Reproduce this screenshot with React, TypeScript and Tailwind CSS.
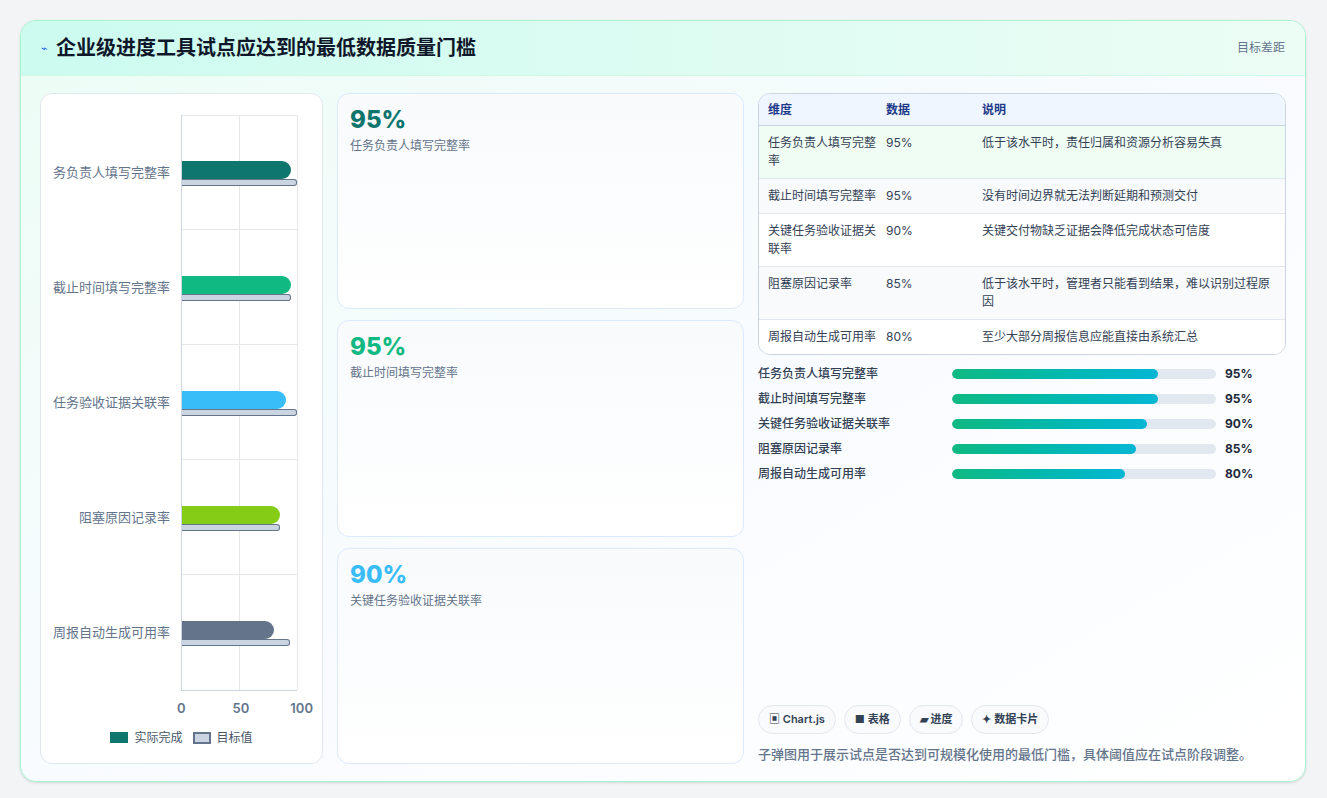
import React from "react";

const rows = [
  { label: "任务负责人填写完整率", show: "务负责人填写完整率", v: 95, t: 100, c: "#0f766e", d: "低于该水平时，责任归属和资源分析容易失真" },
  { label: "截止时间填写完整率", show: "截止时间填写完整率", v: 95, t: 95, c: "#10b981", d: "没有时间边界就无法判断延期和预测交付" },
  { label: "关键任务验收证据关联率", show: "任务验收证据关联率", v: 90, t: 100, c: "#38bdf8", d: "关键交付物缺乏证据会降低完成状态可信度" },
  { label: "阻塞原因记录率", show: "阻塞原因记录率", v: 85, t: 85, c: "#84cc16", d: "低于该水平时，管理者只能看到结果，难以识别过程原因" },
  { label: "周报自动生成可用率", show: "周报自动生成可用率", v: 80, t: 94, c: "#64748b", d: "至少大部分周报信息应能直接由系统汇总" },
];

const cards = [
  { v: "95%", l: "任务负责人填写完整率", c: "text-[#0f766e]" },
  { v: "95%", l: "截止时间填写完整率", c: "text-[#10b981]" },
  { v: "90%", l: "关键任务验收证据关联率", c: "text-[#38bdf8]" },
];

export default function App() {
  return (
    <div className="w-[1327px] h-[798px] bg-[#f3f4f6] p-5 pb-4" style={{ fontFamily: "Inter, 'Noto Sans CJK SC', sans-serif" }}>
      <div className="w-[1286px] h-[762px] rounded-2xl border border-[#a7f3d0] bg-gradient-to-br from-[#ecfdf5] via-[#f8fbff] to-white overflow-hidden flex flex-col shadow-sm">
        <div className="h-[55px] shrink-0 flex items-center justify-between px-5 bg-gradient-to-r from-[#ccfbef] to-[#ecfdf5] border-b border-[#d1fae5]">
          <div className="flex items-center gap-2">
            <span className="text-[#2563eb] text-[11px]">⌁</span>
            <span className="text-[20px] font-bold text-[#0f172a]">企业级进度工具试点应达到的最低数据质量门槛</span>
          </div>
          <span className="text-[12px] text-[#64748b]">目标差距</span>
        </div>
        <div className="flex-1 flex gap-[14px] px-[19px] pt-[17px] pb-[17px]">
          <div className="w-[283px] shrink-0 bg-white rounded-xl border border-[#e2e8f0] flex flex-col pt-[21px] overflow-hidden">
            <div className="flex">
              <div className="w-[140px] shrink-0 flex flex-col">
                {rows.map((r) => (
                  <div key={r.label} className="h-[115px] flex items-center justify-end pr-[11px] text-[13px] text-[#64748b] whitespace-nowrap">{r.show}</div>
                ))}
              </div>
              <div className="relative w-[116px] border-l border-[#cbd5e1] border-b">
                <div className="absolute top-0 bottom-0 left-[57px] border-l border-[#e5e7eb]" />
                <div className="absolute top-0 bottom-0 left-[115px] border-l border-[#e5e7eb]" />
                {rows.map((r, i) => (
                  <div key={r.label} className={`relative h-[115px] ${i === 0 ? "border-t" : ""} border-b border-[#e5e7eb] last:border-b-0 flex flex-col justify-center`}>
                    <div className="h-[18px] rounded-r-[9px] mt-[2px]" style={{ width: `${r.v * 1.15}px`, background: r.c }} />
                    <div className="h-[7px] rounded-r-[3px] bg-[#cbd5e1] border-[1.5px] border-l-0 border-[#64748b]" style={{ width: `${r.t * 1.15}px` }} />
                  </div>
                ))}
              </div>
            </div>
            <div className="flex ml-[136px] w-[136px] justify-between text-[13px] font-semibold text-[#64748b] mt-[8px]">
              <span>0</span><span className="ml-[6px]">50</span><span>100</span>
            </div>
            <div className="flex justify-center items-center gap-[10px] mt-[10px] text-[12px] text-[#475569]">
              <span className="flex items-center gap-[6px]"><span className="w-[18px] h-[11px] bg-[#0f766e]" />实际完成</span>
              <span className="flex items-center gap-[6px]"><span className="w-[18px] h-[12px] bg-[#cbd5e1] border-2 border-[#64748b]" />目标值</span>
            </div>
          </div>
          <div className="w-[407px] shrink-0 flex flex-col gap-[11px]">
            {cards.map((c) => (
              <div key={c.l} className="flex-1 rounded-xl border border-[#dbeafe] bg-gradient-to-b from-[#f8fafc] to-white px-[12px] pt-[10px]">
                <div className={`text-[24px] font-extrabold leading-[32px] ${c.c}`}>{c.v}</div>
                <div className="text-[12px] text-[#64748b] mt-[1px]">{c.l}</div>
              </div>
            ))}
          </div>
          <div className="flex-1 flex flex-col">
            <div className="rounded-xl border border-[#cbd5e1] overflow-hidden bg-white text-[12px] text-[#334155]">
              <div className="flex bg-[#eff6ff] border-b border-[#cbd5e1] h-[32px] items-center font-semibold text-[#1e3a8a]">
                <div className="w-[127px] pl-[9px]">维度</div><div className="w-[96px]">数据</div><div className="flex-1">说明</div>
              </div>
              {rows.map((r, i) => (
                <div key={r.label} className={`flex py-[8px] leading-[18px] ${i < 4 ? "border-b border-[#e2e8f0]" : ""} ${i === 0 ? "bg-[#f0fdf4]" : i % 2 ? "bg-[#f8fafc]" : "bg-white"}`}>
                  <div className="w-[127px] pl-[9px] pr-[8px]">{r.label}</div>
                  <div className="w-[96px]">{r.v}%</div>
                  <div className="flex-1 pr-[8px]">{r.d}</div>
                </div>
              ))}
            </div>
            <div className="flex flex-col gap-[7px] mt-[10px]">
              {rows.map((r) => (
                <div key={r.label} className="flex items-center h-[18px] text-[12px] text-[#334155]">
                  <div className="w-[194px] font-medium">{r.label}</div>
                  <div className="w-[264px] h-[10px] rounded-full bg-[#e2e8f0] overflow-hidden">
                    <div className="h-full rounded-full bg-gradient-to-r from-[#10b981] to-[#06b6d4]" style={{ width: `${r.v * 0.82}%` }} />
                  </div>
                  <div className="ml-[9px] font-bold text-[#1e293b]">{r.v}%</div>
                </div>
              ))}
            </div>
            <div className="flex-1" />
            <div className="flex gap-[8px] text-[11px] font-semibold text-[#334155]">
              {["▣ Chart.js", "■ 表格", "▰ 进度", "✦ 数据卡片"].map((t) => (
                <span key={t} className="h-[29px] px-[10px] flex items-center rounded-full border border-[#e2e8f0] bg-[#f8fafc]">{t}</span>
              ))}
            </div>
            <div className="mt-[11px] text-[13px] font-medium text-[#64748b]">子弹图用于展示试点是否达到可规模化使用的最低门槛，具体阈值应在试点阶段调整。</div>
          </div>
        </div>
      </div>
    </div>
  );
}
